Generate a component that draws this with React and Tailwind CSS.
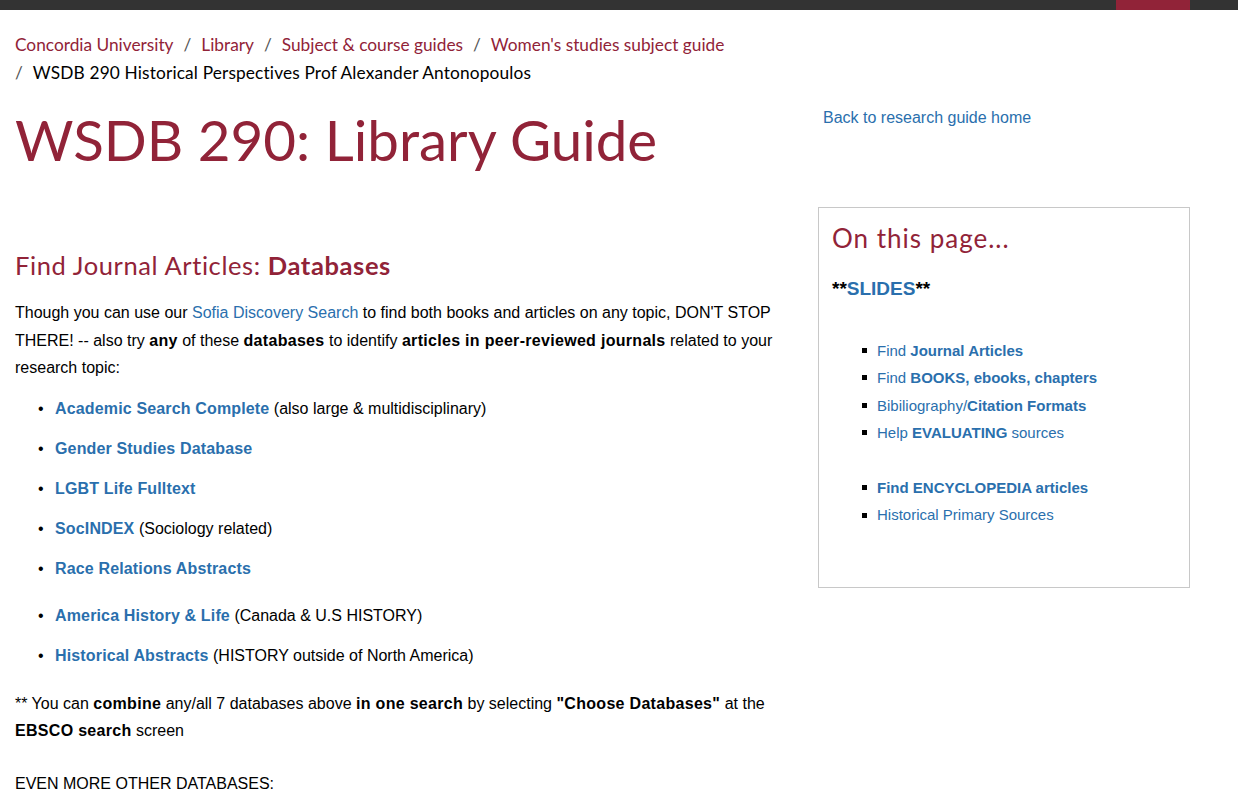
import React from 'react';

const serifish = { fontFamily: 'Lato, "Open Sans", sans-serif' };

const databases = [
  { name: 'Academic Search Complete', note: '(also large & multidisciplinary)' },
  { name: 'Gender Studies Database' },
  { name: 'LGBT Life Fulltext' },
  { name: 'SocINDEX', note: '(Sociology related)' },
  { name: 'Race Relations Abstracts' },
  { name: 'America History & Life', note: '(Canada & U.S HISTORY)', gap: true },
  { name: 'Historical Abstracts', note: '(HISTORY outside of North America)' },
];

function Crumb({ children }) {
  return <a className="text-[#912338]">{children}</a>;
}

function B({ children }) {
  return <b className="tracking-[0.3px]">{children}</b>;
}

export default function App() {
  return (
    <div className="min-h-[800px] bg-white font-['Liberation_Sans',Arial,sans-serif] text-black">
      <div className="h-[10px] bg-[#333333] flex justify-end pr-[48px]">
        <div className="w-[74px] bg-[#912338]" />
      </div>

      <div className="pl-[15px] pr-[48px] pt-[21px]">
        <nav className="text-[17.3px] leading-[28px]" style={serifish}>
          <div>
            <Crumb>Concordia University</Crumb>
            <span className="mx-[10px] text-[#555]">/</span>
            <Crumb>Library</Crumb>
            <span className="mx-[10px] text-[#555]">/</span>
            <Crumb>Subject &amp; course guides</Crumb>
            <span className="mx-[10px] text-[#555]">/</span>
            <Crumb>Women's studies subject guide</Crumb>
          </div>
          <div>
            <span className="mr-[10px] text-[#555]">/</span>
            <span className="tracking-[0.15px]">WSDB 290 Historical Perspectives Prof Alexander Antonopoulos</span>
          </div>
        </nav>

        <div className="flex gap-[33px]">
          <main className="w-[770px] shrink-0">
            <h1 className="mt-[16px] text-[56.5px] leading-[72px] text-[#912338]" style={serifish}>
              WSDB 290: Library Guide
            </h1>

            <h2 className="mt-[73px] text-[25.5px] leading-[34px] text-[#912338] tracking-[0.6px]" style={serifish}>
              Find Journal Articles: <strong className="font-bold">Databases</strong>
            </h2>

            <p className="mt-[17px] text-[16px] leading-[27.5px]">
              Though you can use our <a className="text-[#2a6fad]">Sofia Discovery Search</a> to find both books and
              articles on any topic, DON'T STOP THERE! -- also try <B>any</B> of these <B>databases</B> to identify{' '}
              <B>articles in peer-reviewed journals</B> related to your research topic:
            </p>

            <ul className="mt-[13px] text-[16px] leading-[27px]">
              {databases.map((d) => (
                <li
                  key={d.name}
                  className={`flex items-baseline ${d.gap ? 'mt-[20px]' : 'mt-[13px]'} first:mt-0`}
                >
                  <span className="w-[40px] pl-[23px] text-[16px]">•</span>
                  <span>
                    <a className="font-bold tracking-[0.15px] text-[#2a6fad]">{d.name}</a>
                    {d.note && <span> {d.note}</span>}
                  </span>
                </li>
              ))}
            </ul>

            <p className="mt-[21px] text-[16px] leading-[27.5px]">
              ** You can <B>combine</B> any/all 7 databases above <B>in one search</B> by selecting{' '}
              <B>"Choose Databases"</B> at the <B>EBSCO search</B> screen
            </p>

            <p className="mt-[25px] text-[16px] leading-[27.5px]">EVEN MORE OTHER DATABASES:</p>
          </main>

          <aside className="w-[372px] shrink-0 pt-[19px]">
            <a className="block pl-[5px] text-[16px] leading-[24px] text-[#2a6fad]">Back to research guide home</a>

            <div className="mt-[77px] h-[381px] border border-[#c8c8c8] px-[13px] pt-[14px]">
              <h3 className="text-[26px] leading-[32px] text-[#912338] tracking-[1px]" style={serifish}>
                On this page...
              </h3>
              <p className="mt-[23px] text-[19px] font-bold leading-[24px]">
                **<a className="text-[#2a6fad]">SLIDES</a>**
              </p>

              <ul className="mt-[36px] text-[15px] leading-[27.3px] text-[#2a6fad]">
                <li className="flex items-center">
                  <span className="ml-[30px] mr-[10px] h-[5px] w-[5px] bg-black" />
                  <span>Find <b>Journal Articles</b></span>
                </li>
                <li className="flex items-center">
                  <span className="ml-[30px] mr-[10px] h-[5px] w-[5px] bg-black" />
                  <span>Find <b>BOOKS, ebooks, chapters</b></span>
                </li>
                <li className="flex items-center">
                  <span className="ml-[30px] mr-[10px] h-[5px] w-[5px] bg-black" />
                  <span>Bibiliography/<b>Citation Formats</b></span>
                </li>
                <li className="flex items-center">
                  <span className="ml-[30px] mr-[10px] h-[5px] w-[5px] bg-black" />
                  <span>Help <b>EVALUATING</b> sources</span>
                </li>
                <li className="flex items-center mt-[28px]">
                  <span className="ml-[30px] mr-[10px] h-[5px] w-[5px] bg-black" />
                  <span className="font-bold">Find ENCYCLOPEDIA articles</span>
                </li>
                <li className="flex items-center">
                  <span className="ml-[30px] mr-[10px] h-[5px] w-[5px] bg-black" />
                  <span>Historical Primary Sources</span>
                </li>
              </ul>
            </div>
          </aside>
        </div>
      </div>
    </div>
  );
}
